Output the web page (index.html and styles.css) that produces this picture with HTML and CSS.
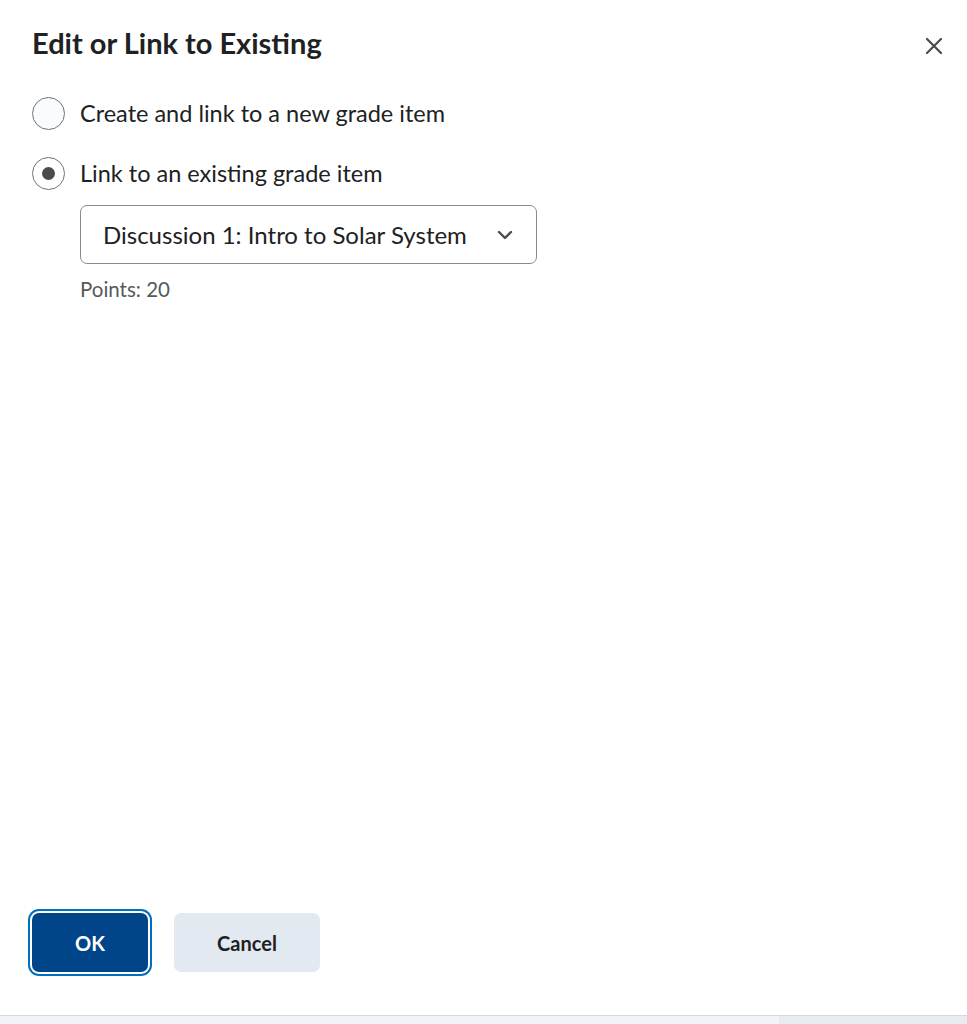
FILE: index.html
```html
<!DOCTYPE html>
<html lang="en">
<head>
<meta charset="utf-8">
<title>Edit or Link to Existing</title>
<link rel="stylesheet" href="styles.css">
</head>
<body>
<div class="dialog">
  <div class="dialog-header">
    <h1 class="dialog-title">Edit or Link to Existing</h1>
    <button class="close-btn" aria-label="Close">
      <svg width="18" height="18" viewBox="0 0 18 18"><path d="M2 2 L16 16 M16 2 L2 16" stroke="#494c4e" stroke-width="2.2" stroke-linecap="round" fill="none"/></svg>
    </button>
  </div>
  <div class="dialog-body">
    <label class="radio-row">
      <span class="radio"></span>
      <span class="radio-label">Create and link to a new grade item</span>
    </label>
    <label class="radio-row">
      <span class="radio checked"><span class="dot"></span></span>
      <span class="radio-label">Link to an existing grade item</span>
    </label>
    <div class="sub-options">
      <div class="select">
        <span class="select-text">Discussion 1: Intro to Solar System</span>
        <svg class="chevron" width="16" height="10" viewBox="0 0 16 10"><path d="M2 2 L8 8 L14 2" stroke="#494c4e" stroke-width="2.4" stroke-linecap="round" stroke-linejoin="round" fill="none"/></svg>
      </div>
      <div class="points">Points: 20</div>
    </div>
  </div>
  <div class="dialog-footer">
    <button class="btn btn-primary">OK</button>
    <button class="btn btn-secondary">Cancel</button>
  </div>
</div>
<div class="bottom-strip">
  <div class="strip-left"></div>
  <div class="strip-right"></div>
</div>
</body>
</html>
```
FILE: styles.css
```css
* { box-sizing: border-box; }
html, body {
  margin: 0;
  padding: 0;
  background: #ffffff;
  font-family: Lato, "Noto Sans", sans-serif;
  color: #202122;
}
.dialog {
  height: 1015px;
  display: flex;
  flex-direction: column;
  padding: 0 32px;
}
.dialog-header {
  display: flex;
  justify-content: space-between;
  align-items: center;
  padding-top: 26px;
}
.dialog-title {
  margin: 0;
  font-size: 29px;
  line-height: 34px;
  font-weight: 700;
  color: #202122;
}
.close-btn {
  border: none;
  background: none;
  padding: 0;
  width: 18px;
  height: 18px;
  margin-right: -8px;
  margin-top: 6px;
  display: flex;
}
.dialog-body {
  flex: 1;
  padding-top: 36px;
}
.radio-row {
  display: flex;
  align-items: center;
  gap: 15px;
  height: 34px;
  margin-bottom: 26px;
}
.radio {
  width: 33px;
  height: 33px;
  border-radius: 50%;
  border: 1.5px solid #6e7376;
  background: #f9fbff;
  display: flex;
  align-items: center;
  justify-content: center;
  flex-shrink: 0;
}
.radio.checked { background: #ffffff; }
.radio .dot {
  width: 13px;
  height: 13px;
  border-radius: 50%;
  background: #494c4e;
}
.radio-label {
  font-size: 23.5px;
  line-height: 34px;
  color: #202122;
}
.sub-options {
  padding-left: 48px;
  margin-top: -11px;
}
.select {
  width: 457px;
  height: 59px;
  border: 1.5px solid #868c8f;
  border-radius: 7px;
  display: flex;
  align-items: center;
  justify-content: space-between;
  padding: 0 23px 0 22px;
}
.select-text {
  font-size: 24px;
  color: #202122;
}
.points {
  font-size: 20.5px;
  color: #565a5c;
  margin-top: 13px;
}
.dialog-footer {
  display: flex;
  align-items: center;
  gap: 26px;
  padding-bottom: 43px;
}
.btn {
  font-family: Lato, "Noto Sans", sans-serif;
  font-weight: 700;
  font-size: 20px;
  height: 59px;
  border-radius: 7px;
  border: none;
  cursor: pointer;
}
.btn-primary {
  width: 116px;
  background: #004489;
  color: #ffffff;
  box-shadow: 0 0 0 2px #ffffff, 0 0 0 4px #006fbe;
}
.btn-secondary {
  width: 146px;
  background: #e3e9f1;
  color: #202122;
}
.bottom-strip {
  display: flex;
  height: 9px;
  border-top: 1.5px solid #d3d9e2;
}
.strip-left { width: 779px; background: #f1f3f6; }
.strip-right { flex: 1; background: #e8ebef; }
```
